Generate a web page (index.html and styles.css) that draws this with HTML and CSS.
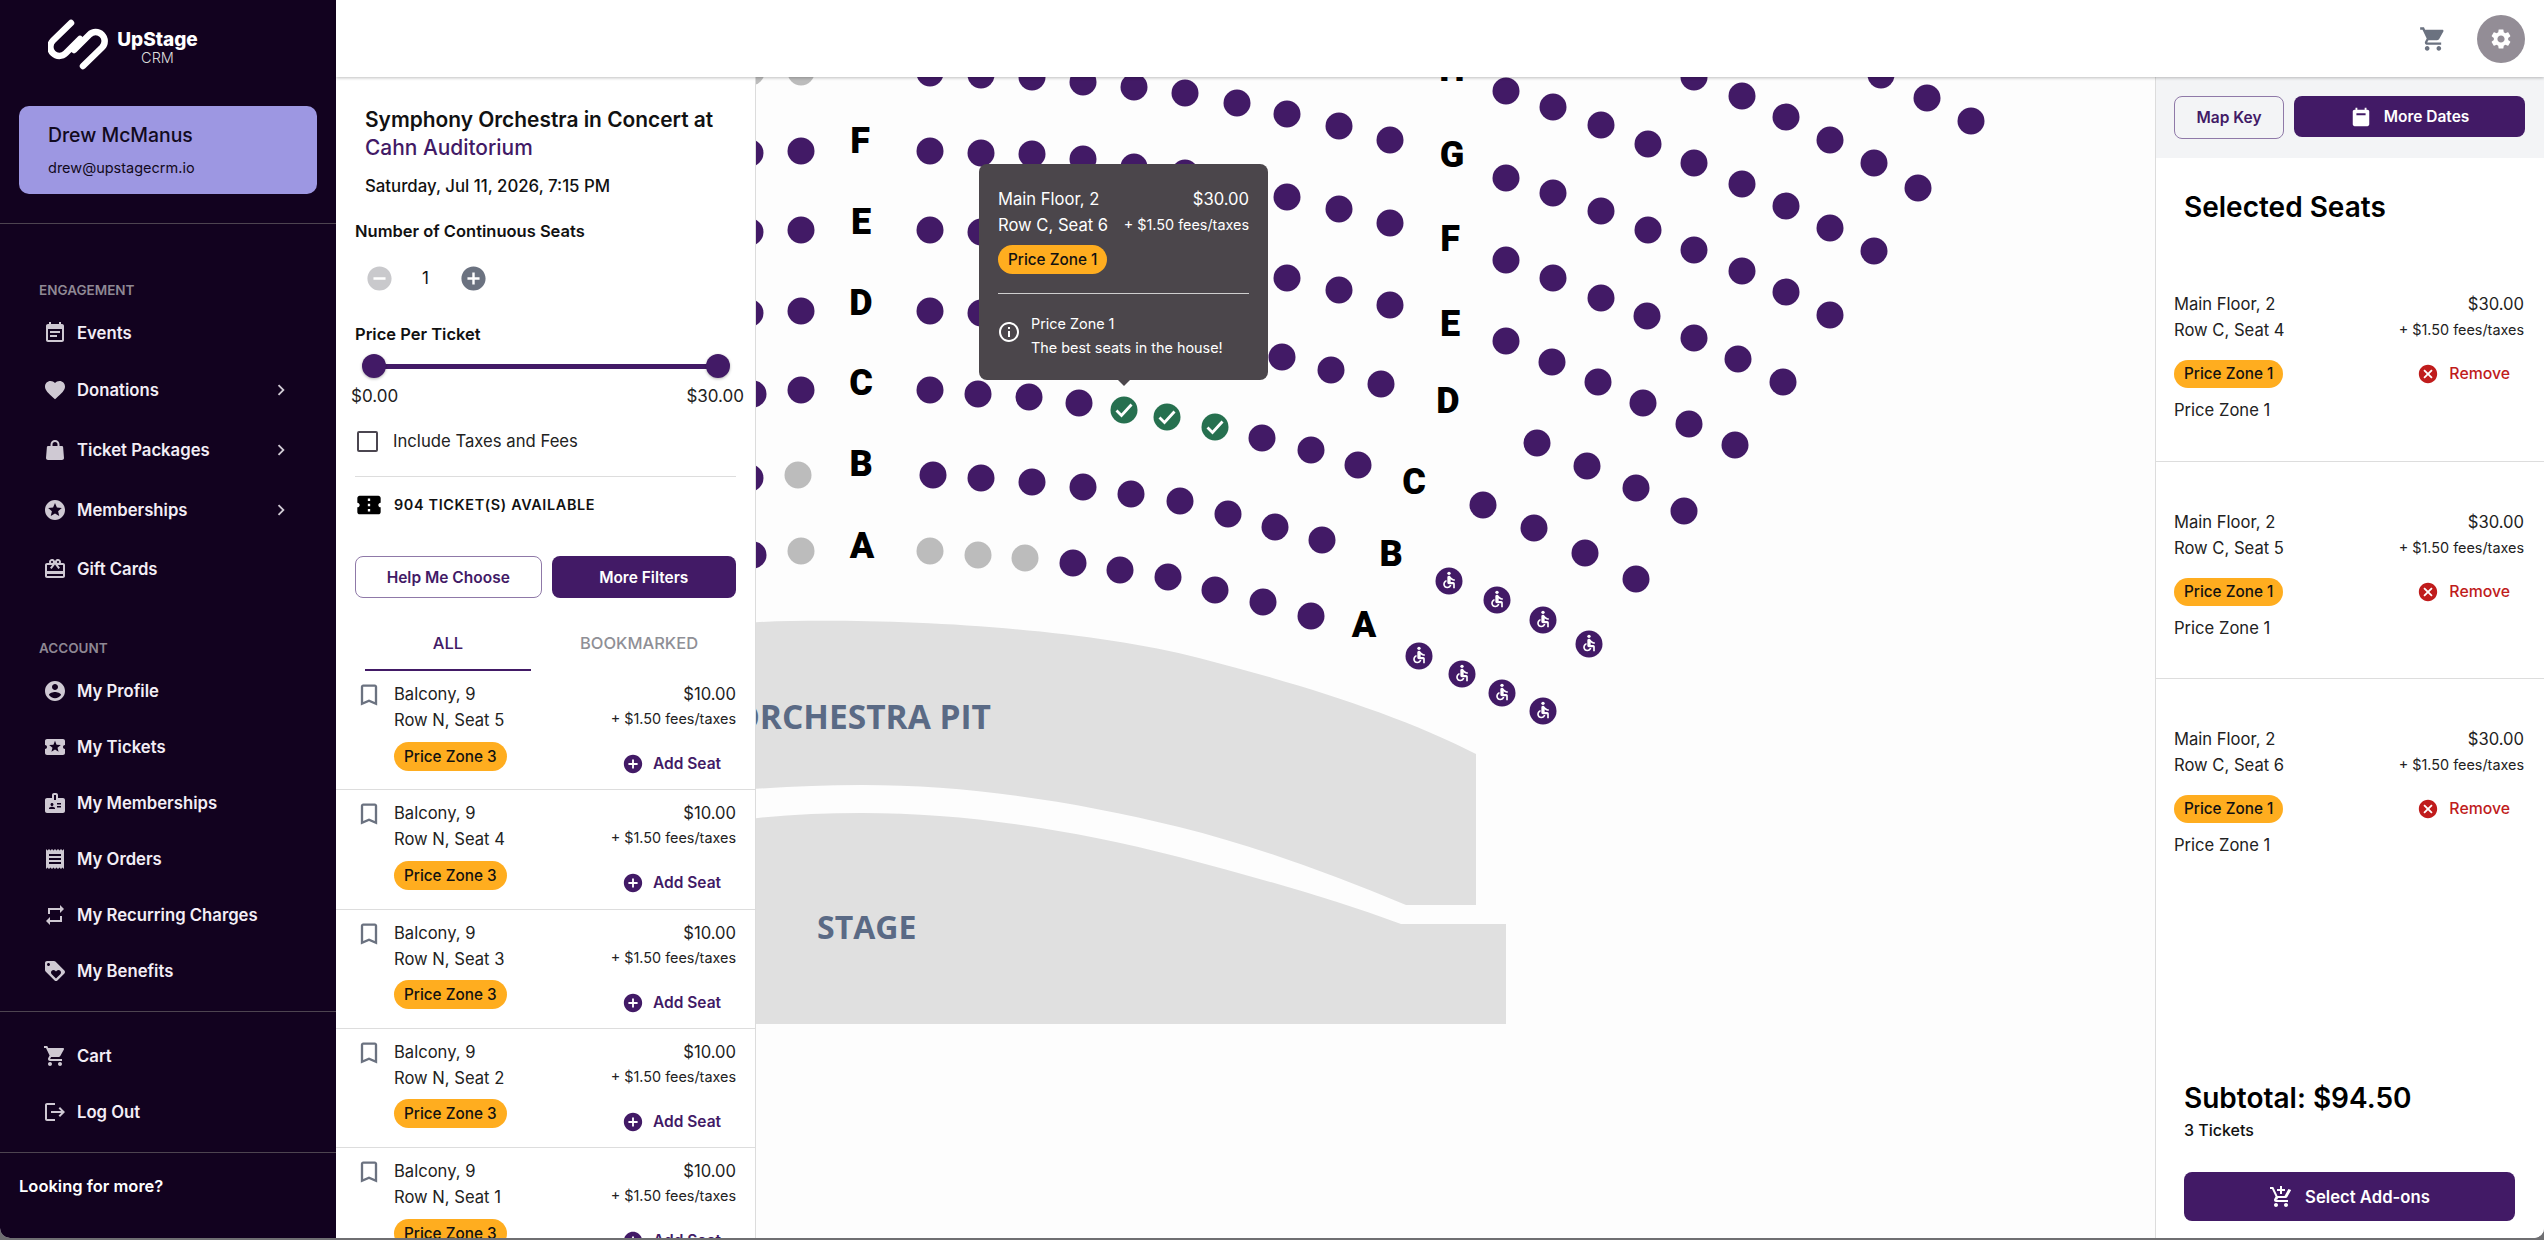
FILE: index.html
```html
<!DOCTYPE html>
<html lang="en">
<head>
<meta charset="utf-8">
<title>UpStage CRM - Select Seats</title>
<link rel="stylesheet" href="styles.css">
</head>
<body>
<svg class="sprite" aria-hidden="true">
  <symbol id="i-note" viewBox="0 0 24 24"><path d="M17 10H7v2h10v-2zm2-7h-1V1h-2v2H8V1H6v2H5c-1.11 0-1.99.9-1.99 2L3 19c0 1.1.89 2 2 2h14c1.1 0 2-.9 2-2V5c0-1.1-.9-2-2-2zm0 16H5V8h14v11zm-5-5H7v2h7v-2z"/></symbol>
  <symbol id="i-heart" viewBox="0 0 24 24"><path d="M12 21.35l-1.45-1.32C5.4 15.36 2 12.28 2 8.5 2 5.42 4.42 3 7.5 3c1.74 0 3.41.81 4.5 2.09C13.09 3.81 14.76 3 16.5 3 19.58 3 22 5.42 22 8.5c0 3.78-3.4 6.86-8.55 11.54L12 21.35z"/></symbol>
  <symbol id="i-bag" viewBox="0 0 24 24"><path fill-rule="evenodd" d="M19 8h-2.5V6.5a4.5 4.5 0 0 0-9 0V8H5c-.6 0-1 .4-1.1 1L3 20c0 1.1.9 2 2 2h14c1.1 0 2-.9 2-2L20.100 9c-.1-.6-.5-1-1.100-1zM9.500 6.500a2.500 2.500 0 0 1 5 0V8h-5z"/></symbol>
  <symbol id="i-star" viewBox="0 0 24 24"><path d="M11.990 2C6.470 2 2 6.480 2 12s4.470 10 9.990 10C17.520 22 22 17.520 22 12S17.520 2 11.990 2zm4.240 16L12 15.450 7.770 18l1.120-4.810-3.730-3.230 4.920-.42L12 5l1.920 4.530 4.920.42-3.730 3.230L16.230 18z"/></symbol>
  <symbol id="i-gift" viewBox="0 0 24 24"><path d="M20 6h-2.180c.11-.31.18-.65.18-1 0-1.660-1.340-3-3-3-1.050 0-1.960.54-2.500 1.350l-.5.67-.5-.68C10.960 2.540 10.050 2 9 2 7.340 2 6 3.340 6 5c0 .35.07.69.18 1H4c-1.110 0-1.990.89-1.990 2L2 19c0 1.110.89 2 2 2h16c1.110 0 2-.89 2-2V8c0-1.110-.89-2-2-2zm-5-2c.55 0 1 .45 1 1s-.45 1-1 1-1-.45-1-1 .45-1 1-1zM9 4c.55 0 1 .45 1 1s-.45 1-1 1-1-.45-1-1 .45-1 1-1zm11 15H4v-2h16v2zm0-5H4V8h5.080L7 10.830 8.620 12 12 7.400l3.380 4.600L17 10.830 14.920 8H20v6z"/></symbol>
  <symbol id="i-person" viewBox="0 0 24 24"><path d="M12 2C6.480 2 2 6.480 2 12s4.480 10 10 10 10-4.480 10-10S17.520 2 12 2zm0 3c1.660 0 3 1.340 3 3s-1.340 3-3 3-3-1.340-3-3 1.340-3 3-3zm0 14.200c-2.500 0-4.710-1.280-6-3.220.03-1.990 4-3.080 6-3.080 1.990 0 5.970 1.090 6 3.080-1.290 1.940-3.500 3.220-6 3.220z"/></symbol>
  <symbol id="i-activity" viewBox="0 0 24 24"><path d="M20 12c0-1.100.9-2 2-2V6c0-1.100-.9-2-2-2H4c-1.100 0-1.990.9-1.990 2v4c1.100 0 1.990.9 1.990 2s-.89 2-2 2v4c0 1.100.9 2 2 2h16c1.100 0 2-.9 2-2v-4c-1.100 0-2-.9-2-2zm-4.420 4.800L12 14.500l-3.580 2.300 1.080-4.120-3.290-2.690 4.240-.25L12 5.800l1.540 3.950 4.240.25-3.290 2.690 1.090 4.110z"/></symbol>
  <symbol id="i-badge" viewBox="0 0 24 24"><path d="M20 7h-5V4c0-1.100-.9-2-2-2h-2c-1.100 0-2 .9-2 2v3H4c-1.100 0-2 .9-2 2v11c0 1.100.9 2 2 2h16c1.100 0 2-.9 2-2V9c0-1.100-.9-2-2-2zM9 12c.83 0 1.500.67 1.500 1.500S9.830 15 9 15s-1.500-.67-1.500-1.500S8.170 12 9 12zm3 6H6v-.75c0-1 2-1.500 3-1.500s3 .5 3 1.500V18zm1-9h-2V4h2v5zm5 7.500h-4V15h4v1.500zm0-3h-4V12h4v1.500z"/></symbol>
  <symbol id="i-receipt" viewBox="0 0 24 24"><path d="M18 17H6v-2h12v2zm0-4H6v-2h12v2zm0-4H6V7h12v2zM3 22l1.500-1.500L6 22l1.500-1.500L9 22l1.500-1.500L12 22l1.500-1.500L15 22l1.500-1.500L18 22l1.500-1.500L21 22V2l-1.500 1.500L18 2l-1.500 1.500L15 2l-1.500 1.500L12 2l-1.500 1.500L9 2 7.500 3.500 6 2 4.500 3.500 3 2v20z"/></symbol>
  <symbol id="i-repeat" viewBox="0 0 24 24"><path d="M7 7h10v3l4-4-4-4v3H5v6h2V7zm10 10H7v-3l-4 4 4 4v-3h12v-6h-2v4z"/></symbol>
  <symbol id="i-loyalty" viewBox="0 0 24 24"><path d="M21.410 11.580l-9-9C12.050 2.220 11.550 2 11 2H4c-1.100 0-2 .9-2 2v7c0 .55.22 1.050.59 1.420l9 9c.36.36.86.58 1.410.58.55 0 1.050-.22 1.410-.59l7-7c.37-.36.59-.86.59-1.410 0-.55-.23-1.060-.59-1.420zM5.500 7C4.670 7 4 6.330 4 5.500S4.670 4 5.500 4 7 4.670 7 5.500 6.330 7 5.500 7zm11.770 8.270L13 19.540l-4.270-4.270C8.280 14.810 8 14.190 8 13.500c0-1.380 1.120-2.500 2.500-2.500.69 0 1.320.28 1.770.74l.73.72.73-.73c.45-.45 1.080-.73 1.770-.73 1.380 0 2.500 1.120 2.500 2.500 0 .69-.28 1.320-.73 1.770z"/></symbol>
  <symbol id="i-cart" viewBox="0 0 24 24"><path d="M7 18c-1.100 0-1.990.9-1.990 2S5.900 22 7 22s2-.9 2-2-.9-2-2-2zM1 2v2h2l3.600 7.590-1.350 2.450c-.16.28-.25.61-.25.96 0 1.100.9 2 2 2h12v-2H7.420c-.14 0-.25-.11-.25-.25l.03-.12.9-1.630h7.450c.75 0 1.410-.41 1.750-1.030l3.580-6.490c.08-.14.12-.31.12-.48 0-.55-.45-1-1-1H5.210l-.94-2H1zm16 16c-1.100 0-1.990.9-1.990 2s.89 2 1.990 2 2-.9 2-2-.9-2-2-2z"/></symbol>
  <symbol id="i-logout" viewBox="0 0 24 24"><path d="M17 7l-1.410 1.410L18.170 11H8v2h10.170l-2.580 2.580L17 17l5-5zM4 5h8V3H4c-1.100 0-2 .9-2 2v14c0 1.100.9 2 2 2h8v-2H4V5z"/></symbol>
  <symbol id="i-chevron" viewBox="0 0 24 24"><path d="M10 6L8.590 7.410 13.170 12l-4.580 4.590L10 18l6-6z"/></symbol>
  <symbol id="i-minus" viewBox="0 0 24 24"><path d="M12 2C6.480 2 2 6.480 2 12s4.480 10 10 10 10-4.480 10-10S17.520 2 12 2zm5 11H7v-2h10v2z"/></symbol>
  <symbol id="i-plus" viewBox="0 0 24 24"><path d="M12 2C6.480 2 2 6.480 2 12s4.480 10 10 10 10-4.480 10-10S17.520 2 12 2zm5 11h-4v4h-2v-4H7v-2h4V7h2v4h4v2z"/></symbol>
  <symbol id="i-bookmark" viewBox="0 0 24 24"><path d="M17 3H7c-1.100 0-1.990.9-1.990 2L5 21l7-3 7 3V5c0-1.100-.9-2-2-2zm0 15l-5-2.180L7 18V5h10v13z"/></symbol>
  <symbol id="i-cancel" viewBox="0 0 24 24"><path d="M12 2C6.470 2 2 6.470 2 12s4.470 10 10 10 10-4.470 10-10S17.530 2 12 2zm5 13.590L15.590 17 12 13.410 8.410 17 7 15.590 10.590 12 7 8.410 8.410 7 12 10.590 15.590 7 17 8.410 13.410 12 17 15.590z"/></symbol>
  <symbol id="i-ticket" viewBox="0 0 24 24"><path d="M22 10V6c0-1.110-.9-2-2-2H4c-1.100 0-1.990.89-1.990 2v4c1.100 0 1.990.9 1.990 2s-.89 2-2 2v4c0 1.100.9 2 2 2h16c1.100 0 2-.9 2-2v-4c-1.100 0-2-.9-2-2s.9-2 2-2zm-9 7.500h-2v-2h2v2zm0-4.500h-2v-2h2v2zm0-4.500h-2v-2h2v2z"/></symbol>
  <symbol id="i-gear" viewBox="0 0 24 24"><path d="M19.140 12.940c.04-.3.06-.61.06-.94 0-.32-.02-.64-.07-.94l2.030-1.580c.18-.14.23-.41.12-.61l-1.920-3.320c-.12-.22-.37-.29-.59-.22l-2.390.96c-.5-.38-1.030-.7-1.620-.94l-.36-2.540c-.04-.24-.24-.41-.48-.41h-3.840c-.24 0-.43.17-.47.41l-.36 2.540c-.59.24-1.130.57-1.620.94l-2.390-.96c-.22-.08-.47 0-.59.22L2.740 8.870c-.12.21-.08.47.12.61l2.030 1.580c-.05.3-.09.63-.09.94s.02.64.07.94l-2.030 1.580c-.18.14-.23.41-.12.61l1.920 3.320c.12.22.37.29.59.22l2.390-.96c.5.38 1.030.7 1.620.94l.36 2.540c.05.24.24.41.48.41h3.840c.24 0 .44-.17.47-.41l.36-2.540c.59-.24 1.130-.56 1.620-.94l2.390.96c.22.08.47 0 .59-.22l1.920-3.320c.12-.22.07-.47-.12-.61l-2.010-1.580zM12 15.600c-1.980 0-3.600-1.620-3.600-3.600s1.620-3.600 3.600-3.600 3.600 1.620 3.600 3.600-1.620 3.600-3.600 3.600z"/></symbol>
  <symbol id="i-info" viewBox="0 0 24 24"><path d="M11 7h2v2h-2zm0 4h2v6h-2zm1-9C6.480 2 2 6.480 2 12s4.480 10 10 10 10-4.480 10-10S17.520 2 12 2zm0 18c-4.410 0-8-3.590-8-8s3.590-8 8-8 8 3.590 8 8-3.590 8-8 8z"/></symbol>
  <symbol id="i-event" viewBox="0 0 24 24"><path fill-rule="evenodd" d="M19 4h-1V2h-2v2H8V2H6v2H5c-1.100 0-2 .9-2 2v14c0 1.100.9 2 2 2h14c1.100 0 2-.9 2-2V6c0-1.100-.9-2-2-2zM7 8h10v2H7z"/></symbol>
  <symbol id="i-addcart" viewBox="0 0 24 24"><path d="M11 9h2V6h3V4h-3V1h-2v3H8v2h3v3zm-4 9c-1.100 0-1.990.9-1.990 2S5.900 22 7 22s2-.9 2-2-.9-2-2-2zm10 0c-1.100 0-1.990.9-1.990 2s.89 2 1.990 2 2-.9 2-2-.9-2-2-2zm-8.830-3.250l.03-.12.9-1.630h7.450c.75 0 1.410-.41 1.750-1.030l3.860-7.010L19.420 4h-.01l-1.100 2-2.760 5H8.530l-.13-.27L6.160 6l-.95-2-.94-2H1v2h2l3.600 7.590-1.350 2.450c-.16.28-.25.61-.25.96 0 1.100.9 2 2 2h12v-2H7.420c-.13 0-.25-.11-.25-.25z"/></symbol>
  <symbol id="i-access" viewBox="0 0 24 24"><circle cx="12" cy="4" r="2"/><path d="M19 13v-2c-1.540.02-3.090-.75-4.070-1.830l-1.290-1.430c-.17-.19-.38-.34-.61-.45-.01 0-.01-.01-.02-.01H13c-.35-.2-.75-.3-1.190-.26C10.760 7.110 10 8.040 10 9.090V15c0 1.100.9 2 2 2h5v5h2v-5.500c0-1.100-.9-2-2-2h-3v-3.450c1.290 1.070 3.250 1.940 5 1.950zm-6.170 5c-.41 1.160-1.520 2-2.830 2-1.660 0-3-1.340-3-3 0-1.310.84-2.410 2-2.830V12.100c-2.280.46-4 2.480-4 4.900 0 2.760 2.240 5 5 5 2.420 0 4.440-1.720 4.900-4h-2.070z"/></symbol>
</svg>

<div class="app">
  <aside class="sidebar">
    <div class="brand">
      <svg class="brand-mark" viewBox="48 19 60 51"><path d="M71 23L53 40.500A9 9 0 0 0 65.700 53.300L80 39"/><path d="M83 66L102 47.500A9 9 0 0 0 89.300 34.700L74 50"/></svg>
      <div class="brand-text"><span class="brand-name">UpStage</span><span class="brand-sub">CRM</span></div>
    </div>
    <div class="user-card">
      <div class="user-name">Drew McManus</div>
      <div class="user-mail">drew@upstagecrm.io</div>
    </div>
    <hr class="side-rule first">
    <div class="side-label">ENGAGEMENT</div>
    <a class="nav-row"><svg class="nav-icon"><use href="#i-note"/></svg><span>Events</span></a>
    <a class="nav-row sub"><svg class="nav-icon"><use href="#i-heart"/></svg><span>Donations</span><svg class="nav-chevron"><use href="#i-chevron"/></svg></a>
    <a class="nav-row sub"><svg class="nav-icon"><use href="#i-bag"/></svg><span>Ticket Packages</span><svg class="nav-chevron"><use href="#i-chevron"/></svg></a>
    <a class="nav-row sub"><svg class="nav-icon"><use href="#i-star"/></svg><span>Memberships</span><svg class="nav-chevron"><use href="#i-chevron"/></svg></a>
    <a class="nav-row"><svg class="nav-icon"><use href="#i-gift"/></svg><span>Gift Cards</span></a>
    <div class="side-label second">ACCOUNT</div>
    <a class="nav-row"><svg class="nav-icon"><use href="#i-person"/></svg><span>My Profile</span></a>
    <a class="nav-row"><svg class="nav-icon"><use href="#i-activity"/></svg><span>My Tickets</span></a>
    <a class="nav-row"><svg class="nav-icon"><use href="#i-badge"/></svg><span>My Memberships</span></a>
    <a class="nav-row"><svg class="nav-icon"><use href="#i-receipt"/></svg><span>My Orders</span></a>
    <a class="nav-row"><svg class="nav-icon"><use href="#i-repeat"/></svg><span>My Recurring Charges</span></a>
    <a class="nav-row"><svg class="nav-icon"><use href="#i-loyalty"/></svg><span>My Benefits</span></a>
    <hr class="side-rule">
    <a class="nav-row"><svg class="nav-icon"><use href="#i-cart"/></svg><span>Cart</span></a>
    <a class="nav-row"><svg class="nav-icon"><use href="#i-logout"/></svg><span>Log Out</span></a>
    <hr class="side-rule">
    <div class="side-more">Looking for more?</div>
  </aside>

  <div class="main">
    <header class="topbar">
      <svg class="top-cart"><use href="#i-cart"/></svg>
      <div class="top-gear"><svg><use href="#i-gear"/></svg></div>
    </header>
    <div class="workspace">
      <section class="finder">
        <div class="event-head">
          <h1 class="event-title">Symphony Orchestra in Concert at <span class="venue">Cahn Auditorium</span></h1>
          <div class="event-date">Saturday, Jul 11, 2026, 7:15 PM</div>
        </div>
        <div class="filters">
          <div class="filter-label">Number of Continuous Seats</div>
          <div class="stepper">
            <svg class="step minus"><use href="#i-minus"/></svg>
            <span class="step-val">1</span>
            <svg class="step plus"><use href="#i-plus"/></svg>
          </div>
          <div class="filter-label price">Price Per Ticket</div>
          <div class="slider"><span class="thumb"></span><span class="thumb"></span></div>
          <div class="slider-values"><span>$0.00</span><span>$30.00</span></div>
          <label class="check"><span class="box"></span>Include Taxes and Fees</label>
          <div class="avail"><svg><use href="#i-ticket"/></svg><span>904 TICKET(S) AVAILABLE</span></div>
          <div class="filter-btns">
            <button class="btn outline">Help Me Choose</button>
            <button class="btn solid">More Filters</button>
          </div>
        </div>
        <div class="tabs"><div class="tab active">ALL</div><div class="tab">BOOKMARKED</div></div>
        <div class="list">
          <div class="ticket">
            <svg class="bookmark"><use href="#i-bookmark"/></svg>
            <div class="t-left"><div>Balcony, 9</div><div>Row N, Seat 5</div><span class="chip">Price Zone 3</span></div>
            <div class="t-right"><div class="price-line">$10.00</div><div class="fees">+ $1.50 fees/taxes</div><div class="add"><svg><use href="#i-plus"/></svg>Add Seat</div></div>
          </div>
          <div class="ticket">
            <svg class="bookmark"><use href="#i-bookmark"/></svg>
            <div class="t-left"><div>Balcony, 9</div><div>Row N, Seat 4</div><span class="chip">Price Zone 3</span></div>
            <div class="t-right"><div class="price-line">$10.00</div><div class="fees">+ $1.50 fees/taxes</div><div class="add"><svg><use href="#i-plus"/></svg>Add Seat</div></div>
          </div>
          <div class="ticket">
            <svg class="bookmark"><use href="#i-bookmark"/></svg>
            <div class="t-left"><div>Balcony, 9</div><div>Row N, Seat 3</div><span class="chip">Price Zone 3</span></div>
            <div class="t-right"><div class="price-line">$10.00</div><div class="fees">+ $1.50 fees/taxes</div><div class="add"><svg><use href="#i-plus"/></svg>Add Seat</div></div>
          </div>
          <div class="ticket">
            <svg class="bookmark"><use href="#i-bookmark"/></svg>
            <div class="t-left"><div>Balcony, 9</div><div>Row N, Seat 2</div><span class="chip">Price Zone 3</span></div>
            <div class="t-right"><div class="price-line">$10.00</div><div class="fees">+ $1.50 fees/taxes</div><div class="add"><svg><use href="#i-plus"/></svg>Add Seat</div></div>
          </div>
          <div class="ticket">
            <svg class="bookmark"><use href="#i-bookmark"/></svg>
            <div class="t-left"><div>Balcony, 9</div><div>Row N, Seat 1</div><span class="chip">Price Zone 3</span></div>
            <div class="t-right"><div class="price-line">$10.00</div><div class="fees">+ $1.50 fees/taxes</div><div class="add"><svg><use href="#i-plus"/></svg>Add Seat</div></div>
          </div>
        </div>
      </section>

      <section class="map">
        <svg class="map-svg" viewBox="756 77 1399 1161">
          <path class="floor" d="M740 623C840 617 1060 622 1199 658C1300 684 1400 715 1476 754V905H1406C1330 873 1255 846 1179 827C1074 801 967 785 862 785C820 785 780 787 740 790Z"/>
          <path class="floor" d="M740 820C780 815 820 813 862 813C967 813 1074 830 1179 857C1255 877 1330 898 1401 924H1506V1024H740Z"/>
          <text class="area-label pit" x="991" y="729" text-anchor="end">ORCHESTRA PIT</text>
          <text class="area-label" x="817" y="939">STAGE</text>

          <g class="rows">
            <text x="860" y="153">F</text><text x="861" y="234">E</text><text x="861" y="315">D</text><text x="861" y="395">C</text><text x="861" y="476">B</text><text x="862" y="558">A</text>
            <text x="1452" y="81">H</text><text x="1452" y="167">G</text><text x="1450" y="251">F</text><text x="1450" y="336">E</text><text x="1448" y="413">D</text><text x="1414" y="494">C</text><text x="1391" y="566">B</text><text x="1364" y="637">A</text>
          </g>

          <g class="seat-off">
            <circle cx="751" cy="72" r="13.5"/><circle cx="801" cy="72" r="13.5"/><circle cx="798" cy="475" r="13.5"/><circle cx="801" cy="551" r="13.5"/><circle cx="930" cy="551" r="13.5"/><circle cx="978" cy="555" r="13.5"/><circle cx="1025" cy="558" r="13.5"/>
          </g>
          <g class="seat">
            <circle cx="750" cy="153" r="13.5"/><circle cx="750" cy="232" r="13.5"/><circle cx="750" cy="313" r="13.5"/><circle cx="753" cy="394" r="13.5"/><circle cx="750" cy="478" r="13.5"/><circle cx="753" cy="555" r="13.5"/>
            <circle cx="801" cy="151" r="13.5"/><circle cx="801" cy="230" r="13.5"/><circle cx="801" cy="311" r="13.5"/><circle cx="801" cy="390" r="13.5"/>
            <circle cx="930" cy="73" r="13.5"/><circle cx="981" cy="75" r="13.5"/><circle cx="1032" cy="77" r="13.5"/><circle cx="1083" cy="82" r="13.5"/><circle cx="1134" cy="87" r="13.5"/><circle cx="1185" cy="93" r="13.5"/><circle cx="1237" cy="103" r="13.5"/><circle cx="1287" cy="114" r="13.5"/><circle cx="1339" cy="126" r="13.5"/><circle cx="1390" cy="140" r="13.5"/>
            <circle cx="930" cy="151" r="13.5"/><circle cx="981" cy="153" r="13.5"/><circle cx="1032" cy="154" r="13.5"/><circle cx="1083" cy="159" r="13.5"/><circle cx="1134" cy="167" r="13.5"/><circle cx="1185" cy="173" r="13.5"/><circle cx="1287" cy="197" r="13.5"/><circle cx="1339" cy="209" r="13.5"/><circle cx="1390" cy="223" r="13.5"/>
            <circle cx="930" cy="230" r="13.5"/><circle cx="981" cy="232" r="13.5"/><circle cx="1287" cy="278" r="13.5"/><circle cx="1339" cy="290" r="13.5"/><circle cx="1390" cy="305" r="13.5"/>
            <circle cx="930" cy="311" r="13.5"/><circle cx="981" cy="313" r="13.5"/><circle cx="1282" cy="357" r="13.5"/><circle cx="1331" cy="370" r="13.5"/><circle cx="1381" cy="384" r="13.5"/>
            <circle cx="930" cy="390" r="13.5"/><circle cx="978" cy="394" r="13.5"/><circle cx="1029" cy="397" r="13.5"/><circle cx="1079" cy="403" r="13.5"/><circle cx="1262" cy="438" r="13.5"/><circle cx="1311" cy="450" r="13.5"/><circle cx="1358" cy="465" r="13.5"/>
            <circle cx="933" cy="475" r="13.5"/><circle cx="981" cy="478" r="13.5"/><circle cx="1032" cy="482" r="13.5"/><circle cx="1083" cy="487" r="13.5"/><circle cx="1131" cy="494" r="13.5"/><circle cx="1180" cy="501" r="13.5"/><circle cx="1228" cy="514" r="13.5"/><circle cx="1275" cy="527" r="13.5"/><circle cx="1322" cy="540" r="13.5"/>
            <circle cx="1073" cy="563" r="13.5"/><circle cx="1120" cy="570" r="13.5"/><circle cx="1168" cy="577" r="13.5"/><circle cx="1215" cy="590" r="13.5"/><circle cx="1263" cy="602" r="13.5"/><circle cx="1311" cy="616" r="13.5"/>
            <circle cx="1506" cy="91" r="13.5"/><circle cx="1553" cy="107" r="13.5"/><circle cx="1601" cy="125" r="13.5"/><circle cx="1648" cy="144" r="13.5"/><circle cx="1694" cy="163" r="13.5"/><circle cx="1742" cy="184" r="13.5"/><circle cx="1786" cy="206" r="13.5"/><circle cx="1830" cy="228" r="13.5"/><circle cx="1874" cy="251" r="13.5"/>
            <circle cx="1506" cy="178" r="13.5"/><circle cx="1553" cy="193" r="13.5"/><circle cx="1601" cy="211" r="13.5"/><circle cx="1648" cy="230" r="13.5"/><circle cx="1694" cy="250" r="13.5"/><circle cx="1742" cy="271" r="13.5"/><circle cx="1786" cy="292" r="13.5"/><circle cx="1830" cy="315" r="13.5"/>
            <circle cx="1506" cy="260" r="13.5"/><circle cx="1553" cy="278" r="13.5"/><circle cx="1601" cy="298" r="13.5"/><circle cx="1647" cy="316" r="13.5"/><circle cx="1694" cy="338" r="13.5"/><circle cx="1738" cy="359" r="13.5"/><circle cx="1783" cy="382" r="13.5"/>
            <circle cx="1506" cy="341" r="13.5"/><circle cx="1552" cy="362" r="13.5"/><circle cx="1598" cy="382" r="13.5"/><circle cx="1643" cy="403" r="13.5"/><circle cx="1689" cy="424" r="13.5"/><circle cx="1735" cy="445" r="13.5"/>
            <circle cx="1537" cy="443" r="13.5"/><circle cx="1587" cy="466" r="13.5"/><circle cx="1636" cy="488" r="13.5"/><circle cx="1684" cy="511" r="13.5"/>
            <circle cx="1483" cy="505" r="13.5"/><circle cx="1534" cy="528" r="13.5"/><circle cx="1585" cy="553" r="13.5"/><circle cx="1636" cy="579" r="13.5"/>
            <circle cx="1694" cy="77" r="13.5"/><circle cx="1742" cy="96" r="13.5"/><circle cx="1786" cy="117" r="13.5"/><circle cx="1830" cy="140" r="13.5"/><circle cx="1874" cy="163" r="13.5"/><circle cx="1918" cy="188" r="13.5"/><circle cx="1881" cy="75" r="13.5"/><circle cx="1927" cy="98" r="13.5"/><circle cx="1971" cy="121" r="13.5"/>
          </g>
          <g class="seat-access">
            <g transform="translate(1449 581)"><circle r="13.5"/><use href="#i-access" x="-10" y="-11" width="20" height="20"/></g>
            <g transform="translate(1497 600)"><circle r="13.5"/><use href="#i-access" x="-10" y="-11" width="20" height="20"/></g>
            <g transform="translate(1543 620)"><circle r="13.5"/><use href="#i-access" x="-10" y="-11" width="20" height="20"/></g>
            <g transform="translate(1589 644)"><circle r="13.5"/><use href="#i-access" x="-10" y="-11" width="20" height="20"/></g>
            <g transform="translate(1419 656)"><circle r="13.5"/><use href="#i-access" x="-10" y="-11" width="20" height="20"/></g>
            <g transform="translate(1462 674)"><circle r="13.5"/><use href="#i-access" x="-10" y="-11" width="20" height="20"/></g>
            <g transform="translate(1502 693)"><circle r="13.5"/><use href="#i-access" x="-10" y="-11" width="20" height="20"/></g>
            <g transform="translate(1543 711)"><circle r="13.5"/><use href="#i-access" x="-10" y="-11" width="20" height="20"/></g>
          </g>
          <g class="seat-picked">
            <g transform="translate(1124 410)"><circle r="13.5"/><path d="M-7.500 0.500L-2.500 5.500L7.500-5.500"/></g>
            <g transform="translate(1167 417)"><circle r="13.5"/><path d="M-7.500 0.500L-2.500 5.500L7.500-5.500"/></g>
            <g transform="translate(1215 427)"><circle r="13.5"/><path d="M-7.500 0.500L-2.500 5.500L7.500-5.500"/></g>
          </g>
        </svg>
        <div class="tooltip">
          <div class="line-pair"><span>Main Floor, 2</span><span>$30.00</span></div>
          <div class="line-pair"><span>Row C, Seat 6</span><span class="tip-fee">+ $1.50 fees/taxes</span></div>
          <span class="chip tip-chip">Price Zone 1</span>
          <hr class="tip-rule">
          <div class="tip-info">
            <svg><use href="#i-info"/></svg>
            <div><div>Price Zone 1</div><div>The best seats in the house!</div></div>
          </div>
        </div>
      </section>

      <aside class="summary">
        <div class="summary-actions">
          <button class="btn outline key">Map Key</button>
          <button class="btn solid dates"><svg><use href="#i-event"/></svg>More Dates</button>
        </div>
        <h2 class="summary-title">Selected Seats</h2>
        <div class="picked">
          <div class="pair"><span>Main Floor, 2</span><span>$30.00</span></div>
          <div class="pair"><span>Row C, Seat 4</span><span class="fees">+ $1.50 fees/taxes</span></div>
          <div class="pair chips"><span class="chip">Price Zone 1</span><span class="remove"><svg><use href="#i-cancel"/></svg>Remove</span></div>
          <div class="zone-note">Price Zone 1</div>
        </div>
        <div class="picked">
          <div class="pair"><span>Main Floor, 2</span><span>$30.00</span></div>
          <div class="pair"><span>Row C, Seat 5</span><span class="fees">+ $1.50 fees/taxes</span></div>
          <div class="pair chips"><span class="chip">Price Zone 1</span><span class="remove"><svg><use href="#i-cancel"/></svg>Remove</span></div>
          <div class="zone-note">Price Zone 1</div>
        </div>
        <div class="picked last">
          <div class="pair"><span>Main Floor, 2</span><span>$30.00</span></div>
          <div class="pair"><span>Row C, Seat 6</span><span class="fees">+ $1.50 fees/taxes</span></div>
          <div class="pair chips"><span class="chip">Price Zone 1</span><span class="remove"><svg><use href="#i-cancel"/></svg>Remove</span></div>
          <div class="zone-note">Price Zone 1</div>
        </div>
        <div class="checkout">
          <div class="subtotal">Subtotal: $94.50</div>
          <div class="count">3 Tickets</div>
          <button class="btn solid addons"><svg><use href="#i-addcart"/></svg>Select Add-ons</button>
        </div>
      </aside>
    </div>
  </div>
</div>
</body>
</html>
```
FILE: styles.css
```css
* { box-sizing: border-box; }
html, body { margin: 0; height: 100%; }
body {
  background: #6f6f72;
  font-family: Inter, "Noto Sans", sans-serif;
  color: #111;
  overflow: hidden;
}
.sprite { display: none; }
svg { fill: currentColor; }

.app {
  display: grid;
  grid-template-columns: 336px 1fr;
  height: 1238px;
  overflow: hidden;
  border-radius: 0 0 10px 10px;
  background: #fff;
}

/* sidebar */
.sidebar {
  background: #12021f;
  color: #f3eef6;
  display: flex;
  flex-direction: column;
}
.brand { height: 106px; display: flex; align-items: flex-start; padding: 19px 0 0 48px; flex: none; }
.brand-mark { width: 60px; height: 51px; fill: none; stroke: #fff; stroke-width: 6.500; stroke-linecap: round; }
.brand-text { display: flex; flex-direction: column; align-items: center; margin: 10px 0 0 9px; width: 81px; color: #fff; }
.brand-name { font-weight: 800; font-size: 19px; line-height: 22px; }
.brand-sub { font-weight: 300; font-size: 14.500px; line-height: 14px; color: #ddd; }
.user-card {
  margin: 0 19px;
  height: 88px;
  background: #9d97e2;
  border-radius: 10px;
  padding: 15px 29px;
  color: #120a20;
  flex: none;
}
.user-name { font-size: 19.400px; font-weight: 500; line-height: 28px; }
.user-mail { font-size: 14.500px; line-height: 20px; margin-top: 9px; }
.side-rule { width: 100%; margin: 12px 0 16px; border: 0; border-top: 1px solid #4d4450; flex: none; }
.side-rule.first { margin: 29px 0 57px; }
.side-label { padding-left: 39px; height: 18px; line-height: 18px; font-size: 13.500px; font-weight: 600; color: #8f8894; flex: none; }
.side-label.second { margin-top: 42px; }
.side-label + .nav-row { margin-top: 6px; }
.nav-row { height: 56px; display: flex; align-items: center; padding-left: 43px; font-size: 16.700px; font-weight: 600; flex: none; }
.nav-row.sub { height: 60px; padding-bottom: 3px; }
.nav-icon { width: 24px; height: 24px; margin-right: 10px; color: #cfc9d3; flex: none; }
.nav-chevron { width: 22px; height: 22px; margin-left: auto; margin-right: 44px; color: #cfc9d3; }
.side-more { padding: 1px 19px; line-height: 32px; font-size: 16.500px; font-weight: 600; color: #fff; }

/* main */
.main { display: grid; grid-template-rows: 77px 1fr; min-width: 0; min-height: 0; }
.topbar {
  position: relative;
  z-index: 2;
  background: #fff;
  box-shadow: 0 1px 3px rgba(0, 0, 0, .25);
  display: flex;
  align-items: center;
  justify-content: flex-end;
  gap: 30px;
  padding-right: 19px;
}
.top-cart { width: 28px; height: 28px; color: #6b7280; }
.top-gear { width: 48px; height: 48px; border-radius: 50%; background: #938d96; color: #fff; display: flex; align-items: center; justify-content: center; }
.top-gear svg { width: 24px; height: 24px; }
.workspace { display: flex; min-height: 0; overflow: hidden; }

/* finder panel */
.finder { width: 420px; flex: none; background: #fff; border-right: 1px solid #dcdcdc; overflow: hidden; }
.event-head { padding: 29px 29px 0; }
.event-title { margin: 0; font-size: 20.900px; line-height: 28px; font-weight: 600; color: #111; }
.venue { display: block; color: #421a66; font-weight: 500; }
.event-date { margin-top: 12px; font-size: 16.800px; font-weight: 500; line-height: 24px; }
.filters { padding: 21px 19px 0; }
.filter-label { font-size: 16.500px; font-weight: 600; line-height: 24px; }
.filter-label.price { margin-top: 20px; }
.stepper { height: 48px; margin-top: 11px; display: flex; align-items: center; padding-left: 10px; }
.step { width: 29px; height: 29px; }
.step.minus { color: #c9c9cc; }
.step.plus { color: #6b7280; }
.step-val { width: 65px; text-align: center; font-size: 17px; padding-right: 2px; }
.slider { position: relative; height: 5px; margin: 18px 6px 0 0; }
.slider::before { content: ""; position: absolute; left: 19px; right: 12px; top: 0; height: 5px; background: #421a66; }
.thumb { position: absolute; top: -10px; left: 7px; width: 24px; height: 24px; border-radius: 50%; background: #421a66; box-shadow: 0 1px 3px rgba(0, 0, 0, .3); }
.thumb + .thumb { left: auto; right: 0; }
.slider-values { display: flex; justify-content: space-between; margin: 15px -8px 0 -4px; font-size: 17px; line-height: 24px; color: #222; }
.check { display: flex; align-items: center; gap: 15px; margin-top: 21px; font-size: 16.700px; line-height: 24px; color: #222; }
.box { width: 21px; height: 21px; margin-left: 2px; border: 2px solid #4b4650; border-radius: 2px; }
.avail { border-top: 1px solid #ddd; margin-top: 23px; height: 56px; display: flex; align-items: center; font-size: 14.400px; font-weight: 600; letter-spacing: .65px; color: #111; }
.avail svg { width: 28px; height: 28px; margin-right: 11px; color: #000; }
.filter-btns { display: flex; gap: 10px; margin-top: 24px; }
.btn { font-family: inherit; font-size: 15.500px; font-weight: 600; border-radius: 8px; cursor: pointer; display: inline-flex; align-items: center; justify-content: center; }
.btn.outline { background: #fff; border: 1px solid #8f79a8; color: #421a66; }
.btn.solid { background: #421a66; border: 0; color: #fff; }
.filter-btns .btn { flex: 1; height: 42px; }
.tabs { display: flex; padding: 24px 0 0 29px; height: 73px; }
.tab { width: 166px; height: 49px; text-align: center; line-height: 42px; font-size: 16.500px; font-weight: 500; color: #8f8f96; margin-right: 14px; }
.tab + .tab { width: 188px; margin-right: 0; }
.tab.active { color: #421a66; border-bottom: 2px solid #421a66; }
.ticket {
  height: 119.300px;
  border-bottom: 1px solid #ddd;
  display: flex;
  padding: 10px 19px 0;
  font-size: 16.600px;
  line-height: 26px;
  color: #222;
}
.bookmark { width: 28px; height: 28px; color: #6b7280; margin-right: 11px; flex: none; }
.t-left { flex: 1; }
.chip { display: inline-block; height: 29px; line-height: 29px; padding: 0 10px; border-radius: 15px; background: #ffad1f; color: #111; font-size: 15.300px; font-weight: 500; margin-top: 8.500px; }
.t-right { text-align: right; }
.fees { font-size: 14.400px; line-height: 24px; color: #222; }
.add { display: flex; align-items: center; justify-content: flex-end; gap: 9px; margin: 22px 15px 0 0; font-size: 15.500px; font-weight: 600; line-height: 22px; color: #421a66; }
.add svg { width: 22px; height: 22px; }

/* map: coordinates in the SVG are the seats' places on the free canvas */
.map { position: relative; flex: 1; min-width: 0; background: #fdfdfd; overflow: hidden; }
.map-svg { display: block; width: 1399px; height: 1161px; }
.floor { fill: #e0e0e0; }
.area-label { font-family: "Open Sans", sans-serif; font-weight: 700; font-size: 32px; fill: #5a6a85; }
.area-label.pit { font-size: 33.500px; }
.rows text { font-family: Roboto, sans-serif; font-weight: 900; font-size: 36px; text-anchor: middle; fill: #000; }
.seat circle { fill: #421a66; }
.seat-off circle { fill: #bcbcbc; }
.seat-access circle { fill: #421a66; }
.seat-access use { fill: #fff; }
.seat-picked circle { fill: #26704f; }
.seat-picked path { fill: none; stroke: #fff; stroke-width: 2.800; }
.tooltip {
  position: absolute;
  left: 223px;
  top: 87px;
  width: 289px;
  height: 216px;
  padding: 22px 19px 0;
  background: #4b464b;
  border-radius: 8px;
  color: #fff;
  font-size: 16.600px;
  line-height: 26px;
}
.tooltip::after { content: ""; position: absolute; left: 138px; bottom: -6px; border: 7px solid transparent; border-bottom: 0; border-top-color: #4b464b; }
.line-pair { display: flex; justify-content: space-between; align-items: center; }
.tip-fee { font-size: 14.400px; }
.chip.tip-chip { margin-top: 7px; height: 29px; }
.tip-rule { margin: 19px 0 0; border: 0; border-top: 1px solid #cfcfcf; }
.tip-info { display: flex; gap: 10px; margin-top: 18px; font-size: 14.400px; line-height: 24px; }
.tip-info svg { width: 24px; height: 24px; margin: 8px 0 0 -1px; flex: none; }

/* selected seats */
.summary { width: 389px; flex: none; background: #fff; border-left: 1px solid #dcdcdc; display: flex; flex-direction: column; }
.summary-actions { height: 81px; background: #f3f4f6; display: flex; align-items: flex-start; gap: 10px; padding: 19px 19px 0 18px; flex: none; }
.btn.key { width: 110px; height: 43px; background: transparent; }
.btn.dates { flex: 1; height: 41px; gap: 12px; }
.btn.dates svg { width: 22px; height: 22px; }
.summary-title { margin: 0; height: 86px; padding: 30px 0 0 28px; font-size: 28px; line-height: 38px; font-weight: 600; color: #000; flex: none; }
.picked { height: 217.500px; padding: 47px 20px 0 18px; border-bottom: 1px solid #ddd; font-size: 16.600px; line-height: 26px; color: #222; flex: none; }
.picked.last { border-bottom: 0; }
.pair { display: flex; justify-content: space-between; align-items: center; }
.pair .fees { line-height: 26px; }
.pair.chips { margin-top: 17px; }
.pair.chips .chip { margin: 0; height: 28px; line-height: 28px; }
.remove { display: flex; align-items: center; gap: 10px; margin-right: 14px; font-size: 15.800px; font-weight: 500; color: #c01c1c; }
.remove svg { width: 22px; height: 22px; }
.zone-note { margin-top: 9px; }
.checkout { margin-top: auto; padding: 0 29px 17px 28px; }
.subtotal { font-size: 28px; line-height: 36px; font-weight: 600; color: #000; }
.count { margin-top: 2px; font-size: 16px; font-weight: 500; line-height: 24px; }
.btn.addons { display: flex; width: 100%; height: 49px; margin-top: 30px; gap: 12px; font-size: 16.700px; }
.btn.addons svg { width: 24px; height: 24px; }
```
